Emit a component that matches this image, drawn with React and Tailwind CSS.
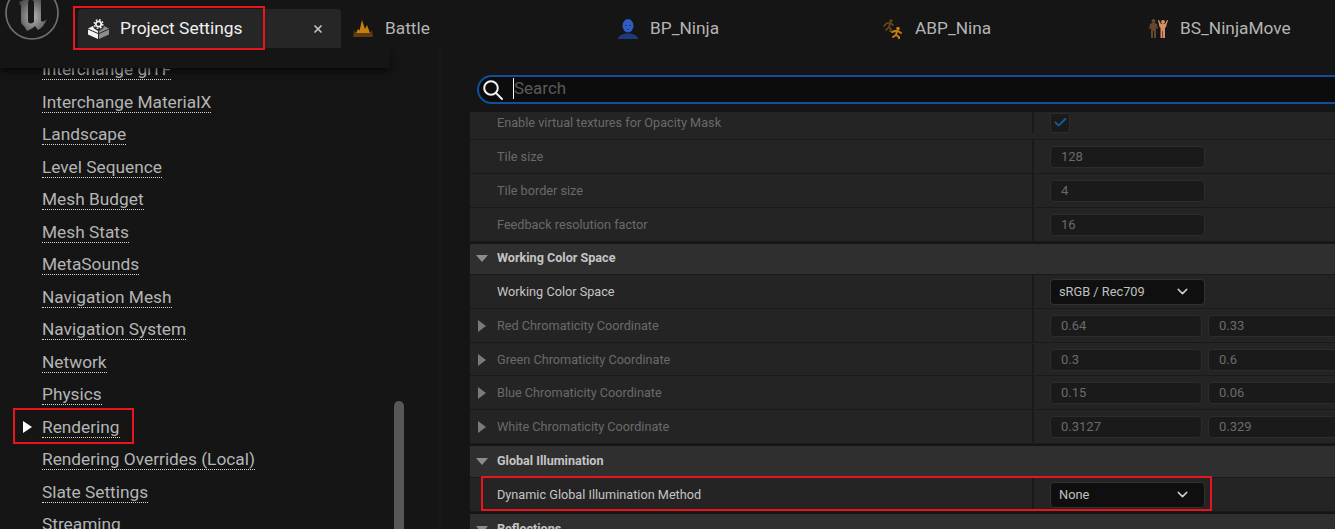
import React from 'react'
import { ChevronDown, X, Check } from 'lucide-react'

const sideItems = [
   'Interchange glTF',
   'Interchange MaterialX',
   'Landscape',
   'Level Sequence',
   'Mesh Budget',
   'Mesh Stats',
   'MetaSounds',
   'Navigation Mesh',
   'Navigation System',
   'Network',
   'Physics',
   'Rendering',
   'Rendering Overrides (Local)',
   'Slate Settings',
   'Streaming',
]

const UnrealLogo = () => (
   <svg width="56" height="56" viewBox="0 0 56 56">
      <defs>
         <radialGradient id="ue" cx="50%" cy="60%" r="60%">
            <stop offset="0%" stopColor="#b4b4b4" />
            <stop offset="100%" stopColor="#4a4a4a" />
         </radialGradient>
      </defs>
      <circle cx="28" cy="28" r="26" fill="#181818" stroke="#6e6e6e" strokeWidth="1.7" />
      <path
         d="M15 17l7-3 4-1-2 4v19c0 3 4 3 6 1V17l-2-3 8-3 2 0-1 4v21c2 1 4 0 6-2-2 5-5 9-9 11l-3-4c-3 3-6 4-8 5l-3-5c-2-1-3-3-3-5V21z"
         fill="url(#ue)"
      />
   </svg>
)

const SettingsIcon = () => (
   <svg width="21" height="20" viewBox="0 0 21 20" className="shrink-0">
      <path d="M0 10.5l10 4.5v5L0 15.5z" fill="#f4f4f4" />
      <path d="M21 10.5l-10 4.5v5l10-4.5z" fill="#8c8c8c" />
      <path d="M0 9.5l5-2.5 1 2.5 4 2.5v2z" fill="#f4f4f4" />
      <path d="M21 9.5l-5-2.5-1 2.5-4 2.5v2z" fill="#8c8c8c" />
      <circle cx="10.5" cy="5" r="2.7" fill="none" stroke="#f4f4f4" strokeWidth="1.7" />
      <circle cx="10.5" cy="5" r="4.3" fill="none" stroke="#f4f4f4" strokeWidth="1.4" strokeDasharray="1.7 1.68" />
   </svg>
)

const LevelIcon = () => (
   <svg width="20" height="17" viewBox="0 0 20 17">
      <path d="M3 13l2-4 1.5 1.5L9 0l3 9 2-4 3 8z" fill="#c47f0c" />
      <path d="M1 10l2 3h14l2-3 1 7H0z" fill="#5a3d10" />
   </svg>
)

const NinjaIcon = () => (
   <svg width="20" height="20" viewBox="0 0 20 20">
      <ellipse cx="10" cy="6.8" rx="5.5" ry="6.8" fill="#2f5cc0" />
      <rect x="7" y="6" width="2" height="1" fill="#1c3a80" />
      <rect x="11" y="6" width="2" height="1" fill="#1c3a80" />
      <rect x="9" y="10" width="2" height="1" fill="#1c3a80" />
      <path d="M0 20c0-3 3-4 7-5.5h6c4 1.5 7 2.5 7 5.5z" fill="#1d3b7c" />
   </svg>
)

const RunnerIcon = () => (
   <svg width="20" height="20" viewBox="0 0 20 20" fill="none" strokeLinecap="round" strokeLinejoin="round">
      <g stroke="#6b4818" strokeWidth="1.7">
         <circle cx="8" cy="1.8" r="1.6" fill="#6b4818" stroke="none" />
         <path d="M1 7l3-3h3l-1 4 2 2-1 2M6 8l-3 3M7 4l3 2" />
      </g>
      <g stroke="#c47f0c" strokeWidth="2">
         <circle cx="15" cy="9.5" r="1.8" fill="#c47f0c" stroke="none" />
         <path d="M9 13l3-1h2l-1 4 3 2v1.5M13 16l-3 2M15 12l3 2" />
      </g>
   </svg>
)

const BlendIcon = () => (
   <svg width="20" height="19" viewBox="0 0 20 19" fill="none">
      <circle cx="5.5" cy="2" r="2" fill="#67462f" />
      <path d="M1 10l1-5 2-1h3l2 1 1 5-1.5 0L8 7v12H6v-7H5v7H3V7l-.5 3z" fill="#67462f" />
      <circle cx="15" cy="3" r="2" fill="#d48f62" />
      <path d="M10 1l1 0 2 4h4l2-4 1 0-2 7-1 1v10h-2v-7h-.5v7h-2V9l-1-1z" fill="#d48f62" />
   </svg>
)

const SearchIcon = () => (
   <svg width="22" height="22" viewBox="0 0 22 22" fill="none" stroke="#f2f2f2" strokeWidth="2">
      <circle cx="9" cy="9" r="6.8" />
      <path d="M14 14l6 6" strokeLinecap="round" />
   </svg>
)

const Tab = ({ icon, label }) => (
   <div className="flex h-[39px] w-[265px] shrink-0 items-center gap-[12px] text-[17.3px] text-[#b4b4b4]">
      {icon}
      <span>{label}</span>
   </div>
)

const Header = () => (
   <header className="relative z-20 flex h-[48px] shrink-0 items-end bg-[#151515]">
      <div className="absolute left-[4px] top-[-15px]">
         <UnrealLogo />
      </div>
      <div className="relative ml-[78px] flex h-[39px] w-[263px] shrink-0 items-center rounded-t-[4px] bg-[#262626] pl-[10px] pr-[17px]">
         <SettingsIcon />
         <span className="ml-[11px] grow whitespace-nowrap text-[17.4px] text-[#f0f0f0]">Project Settings</span>
         <X size={12} strokeWidth={3.5} className="text-[#c0c0c0]" />
         <div className="absolute left-[-5px] top-[-3px] h-[44px] w-[192px] border-2 border-[#e8141e]" />
      </div>
      <div className="ml-[12px] flex">
         <Tab icon={<LevelIcon />} label="Battle" />
         <Tab icon={<NinjaIcon />} label="BP_Ninja" />
         <Tab icon={<RunnerIcon />} label="ABP_Nina" />
         <Tab icon={<BlendIcon />} label="BS_NinjaMove" />
      </div>
   </header>
)

const Sidebar = () => (
   <aside className="relative w-[437px] shrink-0 overflow-hidden">
      <div className="absolute left-0 top-0 z-10 h-[20px] w-[390px] bg-[#151515] shadow-[0_4px_6px_rgba(0,0,0,0.55)]" />
      <ul className="ml-[42px] mt-[5.5px] flex flex-col">
         {sideItems.map((item) => (
            <li key={item} className="relative flex h-[32.5px] items-center">
               {item === 'Rendering' && (
                  <>
                     <span className="absolute left-[-19px] h-0 w-0 border-y-[6px] border-l-[9px] border-y-transparent border-l-white" />
                     <span className="absolute left-[-29px] top-[-3px] h-[36px] w-[121px] border-2 border-[#e8141e]" />
                  </>
               )}
               <span className="border-b border-dotted border-[#d8d8d8] text-[17.3px] leading-[20px] text-[#b4b4b4]">
                  {item}
               </span>
            </li>
         ))}
      </ul>
      <div className="absolute left-[394px] top-[353px] h-[140px] w-[10px] rounded-full bg-[#575757]" />
   </aside>
)

const Caret = ({ open }) =>
   open ? (
      <span className="absolute left-[6px] h-0 w-0 border-x-[6px] border-t-[7px] border-x-transparent border-t-[#8c8c8c]" />
   ) : (
      <span className="absolute left-[8px] h-0 w-0 border-y-[6px] border-l-[8px] border-y-transparent border-l-[#7a7a7a]" />
   )

const Field = ({ value, className }) => (
   <div className={`flex h-[22px] items-center rounded-[4px] border border-[#2c2c2c] bg-[#1a1a1a] pl-[10px] text-[13px] text-[#6a6a6a] ${className}`}>
      {value}
   </div>
)

const Dropdown = ({ value }) => (
   <div className="flex h-[26px] w-[155px] items-center justify-between rounded-[4px] border border-[#323232] bg-[#0f0f0f] pl-[8px] pr-[13px] text-[12.8px] text-[#c0c0c0]">
      {value}
      <ChevronDown size={17} strokeWidth={2} className="text-[#d0d0d0]" />
   </div>
)

const Row = ({ label, dim = true, caret, children, className = 'h-[34px]' }) => (
   <div className={`flex items-stretch border-b border-[#1a1a1a] bg-[#242424] ${className}`}>
      <div className={`relative flex w-[564px] shrink-0 items-center border-r-2 border-[#1a1a1a] pl-[27px] text-[12.7px] ${dim ? 'text-[#6a6a6a]' : 'text-[#c4c4c4]'}`}>
         {caret && <Caret />}
         {label}
      </div>
      <div className="flex items-center gap-[6px] pl-[16px]">{children}</div>
   </div>
)

const Section = ({ label, className = 'h-[34px]' }) => (
   <div className={`relative flex items-center border-b border-t-2 border-b-[#1a1a1a] border-t-[#151515] bg-[#2f2f2f] pl-[27px] text-[12.6px] font-bold text-[#c4c4c4] ${className}`}>
      <Caret open />
      {label}
   </div>
)

const Pair = ({ a, b }) => (
   <>
      <Field value={a} className="w-[152px]" />
      <Field value={b} className="w-[140px]" />
   </>
)

const Details = () => (
   <main className="min-w-0 grow overflow-hidden border-l-4 border-[#181818] pl-[29px]">
      <div className="mb-[8px] ml-[7px] mt-[27px] flex h-[29px] w-[900px] items-center rounded-l-full border-2 border-[#0f4f9e] bg-[#0c0c0c] pl-[3px]">
         <SearchIcon />
         <span className="mb-[3px] ml-[9px] border-l border-white text-[17px] leading-[21px] text-[#5a5a5a]">Search</span>
      </div>
      <Row label="Enable virtual textures for Opacity Mask" className="h-[28px] pb-[6px]">
         <div className="flex h-[20px] w-[20px] items-center justify-center rounded-[3px] border border-[#2c2c2c] bg-[#1a1a1a]">
            <Check size={15} strokeWidth={3} className="text-[#175a9c]" />
         </div>
      </Row>
      <Row label="Tile size"><Field value="128" className="w-[155px]" /></Row>
      <Row label="Tile border size"><Field value="4" className="w-[155px]" /></Row>
      <Row label="Feedback resolution factor"><Field value="16" className="w-[155px]" /></Row>
      <Section label="Working Color Space" className="h-[33px] pb-[1px]" />
      <Row label="Working Color Space" dim={false}><Dropdown value="sRGB / Rec709" /></Row>
      <Row label="Red Chromaticity Coordinate" caret><Pair a="0.64" b="0.33" /></Row>
      <Row label="Green Chromaticity Coordinate" caret className="h-[33px] pt-[1px]"><Pair a="0.3" b="0.6" /></Row>
      <Row label="Blue Chromaticity Coordinate" caret><Pair a="0.15" b="0.06" /></Row>
      <Row label="White Chromaticity Coordinate" caret><Pair a="0.3127" b="0.329" /></Row>
      <Section label="Global Illumination" />
      <div className="relative">
         <Row label="Dynamic Global Illumination Method" dim={false}><Dropdown value="None" /></Row>
         <div className="absolute left-[11px] top-[-2px] h-[35px] w-[731px] border-2 border-[#e8141e]" />
      </div>
      <Section label="Reflections" />
   </main>
)

const App = () => {
   return (
      <div className="flex h-[529px] w-[1335px] flex-col overflow-hidden bg-[#151515] font-['Roboto',sans-serif]">
         <Header />
         <div className="flex min-h-0 grow">
            <Sidebar />
            <Details />
         </div>
      </div>
   )
}

export default App
